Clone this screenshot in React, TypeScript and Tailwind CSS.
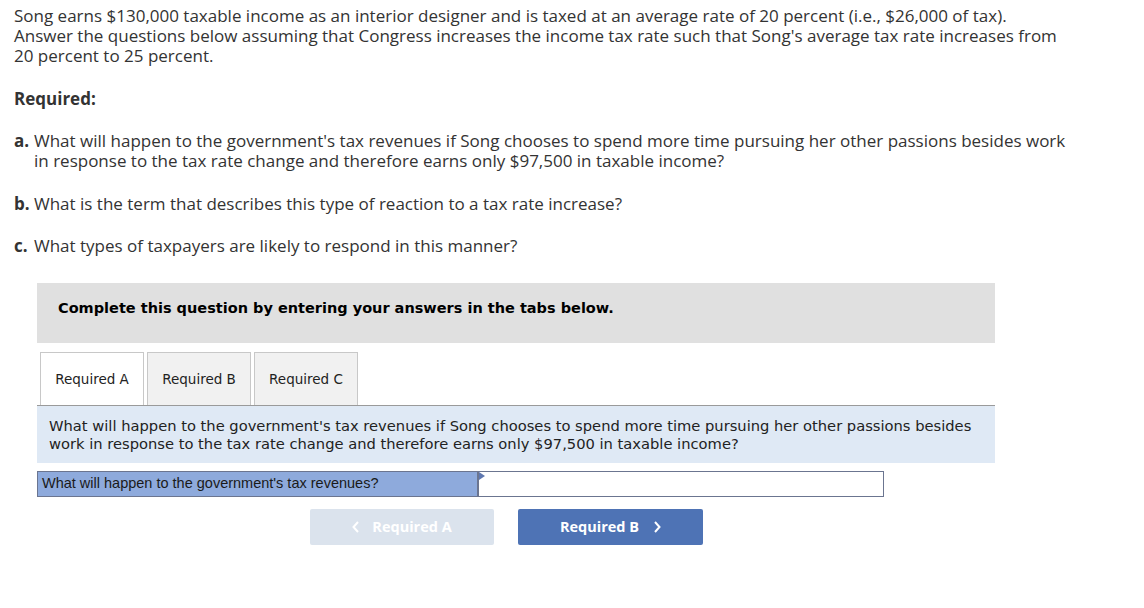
import React from 'react';

const tabs = ['Required A', 'Required B', 'Required C'];

const App: React.FC = () => {
  return (
    <div className="min-h-screen bg-white text-[#333] font-['Open_Sans',sans-serif]">
      <div className="pl-[14px] pt-[6px] text-[17px] leading-[20px]">
        <p className="whitespace-nowrap">
          <span className="block">Song earns $130,000 taxable income as an interior designer and is taxed at an average rate of 20 percent (i.e., $26,000 of tax).</span>
          <span className="block">Answer the questions below assuming that Congress increases the income tax rate such that Song's average tax rate increases from</span>
          <span className="block">20 percent to 25 percent.</span>
        </p>

        <p className="mt-[23px] font-bold">Required:</p>

        <div className="mt-[22px] flex whitespace-nowrap">
          <span className="w-[20px] shrink-0 font-bold">a.</span>
          <span>
            <span className="block">What will happen to the government's tax revenues if Song chooses to spend more time pursuing her other passions besides work</span>
            <span className="block">in response to the tax rate change and therefore earns only $97,500 in taxable income?</span>
          </span>
        </div>
        <div className="mt-[23px] flex">
          <span className="w-[20px] shrink-0 font-bold">b.</span>
          <span>What is the term that describes this type of reaction to a tax rate increase?</span>
        </div>
        <div className="mt-[22px] flex">
          <span className="w-[20px] shrink-0 font-bold">c.</span>
          <span>What types of taxpayers are likely to respond in this manner?</span>
        </div>
      </div>

      <div className="ml-[37px] mt-[27px] w-[958px]">
        <div className="h-[60px] bg-[#e0e0e0] pl-[21px] pt-[16px] font-['DejaVu_Sans',sans-serif] text-[14.5px] leading-[18px] font-bold text-black">
          Complete this question by entering your answers in the tabs below.
        </div>

        <div className="mt-[9px] flex gap-[3px] pl-[3px]">
          {tabs.map((t, i) => (
            <div
              key={t}
              className={`flex h-[53px] w-[104px] items-center justify-center border border-b-0 border-[#c8c8c8] font-['DejaVu_Sans',sans-serif] text-[13.5px] text-[#222] ${
                i === 0 ? 'bg-white' : 'bg-[#f1f1f1]'
              }`}
            >
              {t}
            </div>
          ))}
        </div>

        <div className="whitespace-nowrap border-t border-[#9a9a9a] bg-[#dfe9f5] px-[12px] pt-[11px] pb-[10px] font-['DejaVu_Sans',sans-serif] text-[14.7px] leading-[18px] text-[#222]">
          <span className="block">What will happen to the government's tax revenues if Song chooses to spend more time pursuing her other passions besides</span>
          <span className="block">work in response to the tax rate change and therefore earns only $97,500 in taxable income?</span>
        </div>

        <div className="mt-[8px] flex h-[26px] w-[847px] border border-[#6b7590]">
          <div className="flex w-[439px] items-center bg-[#8eaadc] pl-[4px] font-['Liberation_Sans',sans-serif] text-[14.5px] text-[#1a1a1a]">
            What will happen to the government's tax revenues?
          </div>
          <div className="relative flex-1 border-l-2 border-[#6b7590] bg-white">
            <span className="absolute left-0 top-0 h-0 w-0 border-y-[4px] border-l-[6px] border-y-transparent border-l-[#5f78b0]" />
          </div>
        </div>

        <div className="mt-[12px] flex gap-[24px] pl-[273px]">
          <button
            type="button"
            className="flex h-[36px] w-[184px] items-center justify-center gap-[12px] rounded-[2px] bg-[#dbe3ed] text-[14.5px] font-bold text-white"
          >
            <svg width="8" height="12" viewBox="0 0 8 12" fill="none" stroke="currentColor" strokeWidth="2">
              <path d="M6 1L1.5 6L6 11" />
            </svg>
            Required A
          </button>
          <button
            type="button"
            className="flex h-[36px] w-[185px] items-center justify-center gap-[14px] rounded-[2px] bg-[#4e73b5] text-[14.5px] font-bold text-white"
          >
            Required B
            <svg width="8" height="12" viewBox="0 0 8 12" fill="none" stroke="currentColor" strokeWidth="2">
              <path d="M2 1L6.5 6L2 11" />
            </svg>
          </button>
        </div>
      </div>
    </div>
  );
};

export default App;
